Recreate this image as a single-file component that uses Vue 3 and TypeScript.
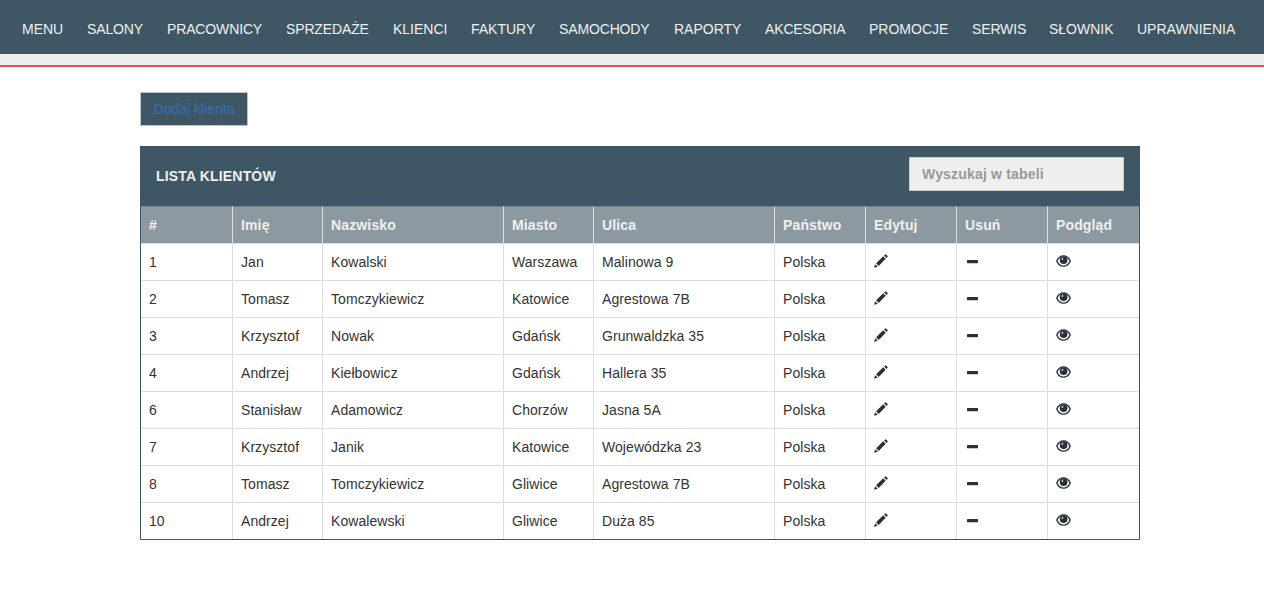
<script setup lang="ts">
import { ref, computed } from 'vue'

interface Client {
  id: number
  firstName: string
  lastName: string
  city: string
  street: string
  country: string
}

interface MenuItem {
  label: string
  tight?: boolean
}

const menu: MenuItem[] = [
  { label: 'MENU' },
  { label: 'SALONY', tight: true },
  { label: 'PRACOWNICY', tight: true },
  { label: 'SPRZEDAŻE', tight: true },
  { label: 'KLIENCI' },
  { label: 'FAKTURY' },
  { label: 'SAMOCHODY', tight: true },
  { label: 'RAPORTY' },
  { label: 'AKCESORIA', tight: true },
  { label: 'PROMOCJE' },
  { label: 'SERWIS', tight: true },
  { label: 'SŁOWNIK' },
  { label: 'UPRAWNIENIA' },
]

const headers: string[] = ['#', 'Imię', 'Nazwisko', 'Miasto', 'Ulica', 'Państwo', 'Edytuj', 'Usuń', 'Podgląd']

const clients = ref<Client[]>([
  { id: 1, firstName: 'Jan', lastName: 'Kowalski', city: 'Warszawa', street: 'Malinowa 9', country: 'Polska' },
  { id: 2, firstName: 'Tomasz', lastName: 'Tomczykiewicz', city: 'Katowice', street: 'Agrestowa 7B', country: 'Polska' },
  { id: 3, firstName: 'Krzysztof', lastName: 'Nowak', city: 'Gdańsk', street: 'Grunwaldzka 35', country: 'Polska' },
  { id: 4, firstName: 'Andrzej', lastName: 'Kiełbowicz', city: 'Gdańsk', street: 'Hallera 35', country: 'Polska' },
  { id: 6, firstName: 'Stanisław', lastName: 'Adamowicz', city: 'Chorzów', street: 'Jasna 5A', country: 'Polska' },
  { id: 7, firstName: 'Krzysztof', lastName: 'Janik', city: 'Katowice', street: 'Wojewódzka 23', country: 'Polska' },
  { id: 8, firstName: 'Tomasz', lastName: 'Tomczykiewicz', city: 'Gliwice', street: 'Agrestowa 7B', country: 'Polska' },
  { id: 10, firstName: 'Andrzej', lastName: 'Kowalewski', city: 'Gliwice', street: 'Duża 85', country: 'Polska' },
])

const query = ref('')

const visible = computed<Client[]>(() => {
  const q = query.value.trim().toLowerCase()
  return q ? clients.value.filter((c) => Object.values(c).join(' ').toLowerCase().includes(q)) : clients.value
})

function remove(id: number): void {
  clients.value = clients.value.filter((c) => c.id !== id)
}
</script>

<template>
  <div class="page">
    <nav class="nav">
      <a v-for="item in menu" :key="item.label" class="nav-item" :class="{ tight: item.tight }">{{ item.label }}</a>
    </nav>
    <div class="strip"></div>

    <main class="content">
      <button class="add" type="button">Dodaj klienta</button>

      <section class="panel">
        <header class="panel-head">
          <h3 class="title">LISTA KLIENTÓW</h3>
          <input v-model="query" class="search" type="text" placeholder="Wyszukaj w tabeli" />
        </header>
        <table class="table">
          <colgroup>
            <col class="c-first" /><col class="c-small" /><col class="c-wide" /><col class="c-small" /><col class="c-wide" />
            <col class="c-mid" /><col class="c-mid" /><col class="c-mid" /><col class="c-mid" />
          </colgroup>
          <thead>
            <tr>
              <th v-for="h in headers" :key="h">{{ h }}</th>
            </tr>
          </thead>
          <tbody>
            <tr v-for="c in visible" :key="c.id">
              <td>{{ c.id }}</td>
              <td>{{ c.firstName }}</td>
              <td>{{ c.lastName }}</td>
              <td>{{ c.city }}</td>
              <td>{{ c.street }}</td>
              <td>{{ c.country }}</td>
              <td>
                <svg class="icon" viewBox="0 0 14 14">
                  <path d="M0 13.8 L1.2 10.2 L3.8 12.800 Z M2.100 9.300 L9.200 2.300 L11.700 4.800 L4.700 11.900 Z M10.100 1.500 L11.200 0.400 Q11.600 0 12 0.400 L13.600 2 Q14 2.400 13.600 2.800 L12.500 3.900 Z" />
                </svg>
              </td>
              <td>
                <svg class="icon" viewBox="0 0 14 14" @click="remove(c.id)">
                  <rect x="2" y="6" width="11" height="3.200" rx="0.600" />
                </svg>
              </td>
              <td>
                <svg class="icon eye" viewBox="0 0 15 14">
                  <path class="lid" d="M0.800 7 C2.200 3.700 4.600 1.900 7.500 1.900 C10.400 1.900 12.800 3.700 14.200 7 C12.800 10.300 10.400 12.100 7.500 12.100 C4.600 12.100 2.200 10.300 0.800 7 Z" />
                  <circle cx="7.600" cy="6.100" r="3.900" />
                  <path class="glint" d="M5.300 6.200 C5.200 4.800 5.900 3.900 7.100 3.600 L7.400 5.500 Z" />
                </svg>
              </td>
            </tr>
          </tbody>
        </table>
      </section>
    </main>
  </div>
</template>

<style>
body {
  margin: 0;
  background: #fff;
}
</style>

<style scoped>
.page {
  font-family: "Liberation Sans", Arial, sans-serif;
  font-size: 14px;
  line-height: 20px;
  color: #333;
}
.nav {
  display: grid;
  grid-template-columns: 65px 80px 119px 107px 78px 88px 115px 91px 104px 103px 77px 88px 122px;
  height: 54px;
  padding: 0 10px;
  box-sizing: border-box;
  background: #3f5765;
}
.nav-item {
  padding: 19px 0 0 12px;
  color: #efefef;
  white-space: nowrap;
  cursor: pointer;
}
.tight {
  letter-spacing: -0.14px;
}
.strip {
  height: 11px;
  background: #efefef;
  border-bottom: 2px solid #d0603a;
}
.content {
  width: 1000px;
  margin-left: 140px;
  padding-top: 25px;
}
.add {
  display: block;
  width: 108px;
  height: 34px;
  padding: 0;
  border: 1px solid #bcc4c9;
  background: #3f5765;
  color: #3470b4;
  font: inherit;
  cursor: pointer;
}
.panel {
  margin-top: 20px;
  border: 1px solid #3f5765;
}
.panel-head {
  display: flex;
  align-items: flex-start;
  justify-content: space-between;
  height: 59px;
  padding: 10px 15px 0;
  box-sizing: border-box;
  background: #3f5765;
}
.title {
  margin: 9px 0 0;
  font-size: 14px;
  line-height: 20px;
  font-weight: bold;
  letter-spacing: 0.17px;
  color: #efefef;
}
.search {
  width: 215px;
  height: 34px;
  padding: 0 12px;
  box-sizing: border-box;
  border: 1px solid #ccc;
  border-radius: 0;
  background: #efefef;
  font: bold 14px "Liberation Sans", Arial, sans-serif;
  letter-spacing: 0.18px;
  color: #555;
  outline: none;
}
.search::placeholder {
  color: #999;
  opacity: 1;
}
.table {
  width: 998px;
  table-layout: fixed;
  border-collapse: separate;
  border-spacing: 0;
}
.c-first { width: 92px; }
.c-small { width: 90px; }
.c-wide { width: 181px; }
.c-mid { width: 91px; }
th,
td {
  height: 37px;
  padding: 0 0 0 8px;
  box-sizing: border-box;
  border-right: 1px solid #ddd;
  border-bottom: 1px solid #ddd;
  text-align: left;
  vertical-align: middle;
  white-space: nowrap;
  letter-spacing: 0.06px;
}
th {
  height: 38px;
  background: #8c99a1;
  color: #efefef;
  font-weight: bold;
  letter-spacing: 0.14px;
  border-top: 1px solid #75858e;
}
th:last-child,
td:last-child {
  border-right: 0;
}
tbody tr:last-child td {
  height: 36px;
  border-bottom: 0;
}
.icon {
  display: block;
  width: 14px;
  height: 14px;
  margin-top: -3px;
  fill: #263238;
  cursor: pointer;
}
.eye {
  width: 15px;
}
.lid {
  fill: none;
  stroke: #263238;
  stroke-width: 1.4;
}
.glint {
  fill: #b5bcc0;
}
</style>
